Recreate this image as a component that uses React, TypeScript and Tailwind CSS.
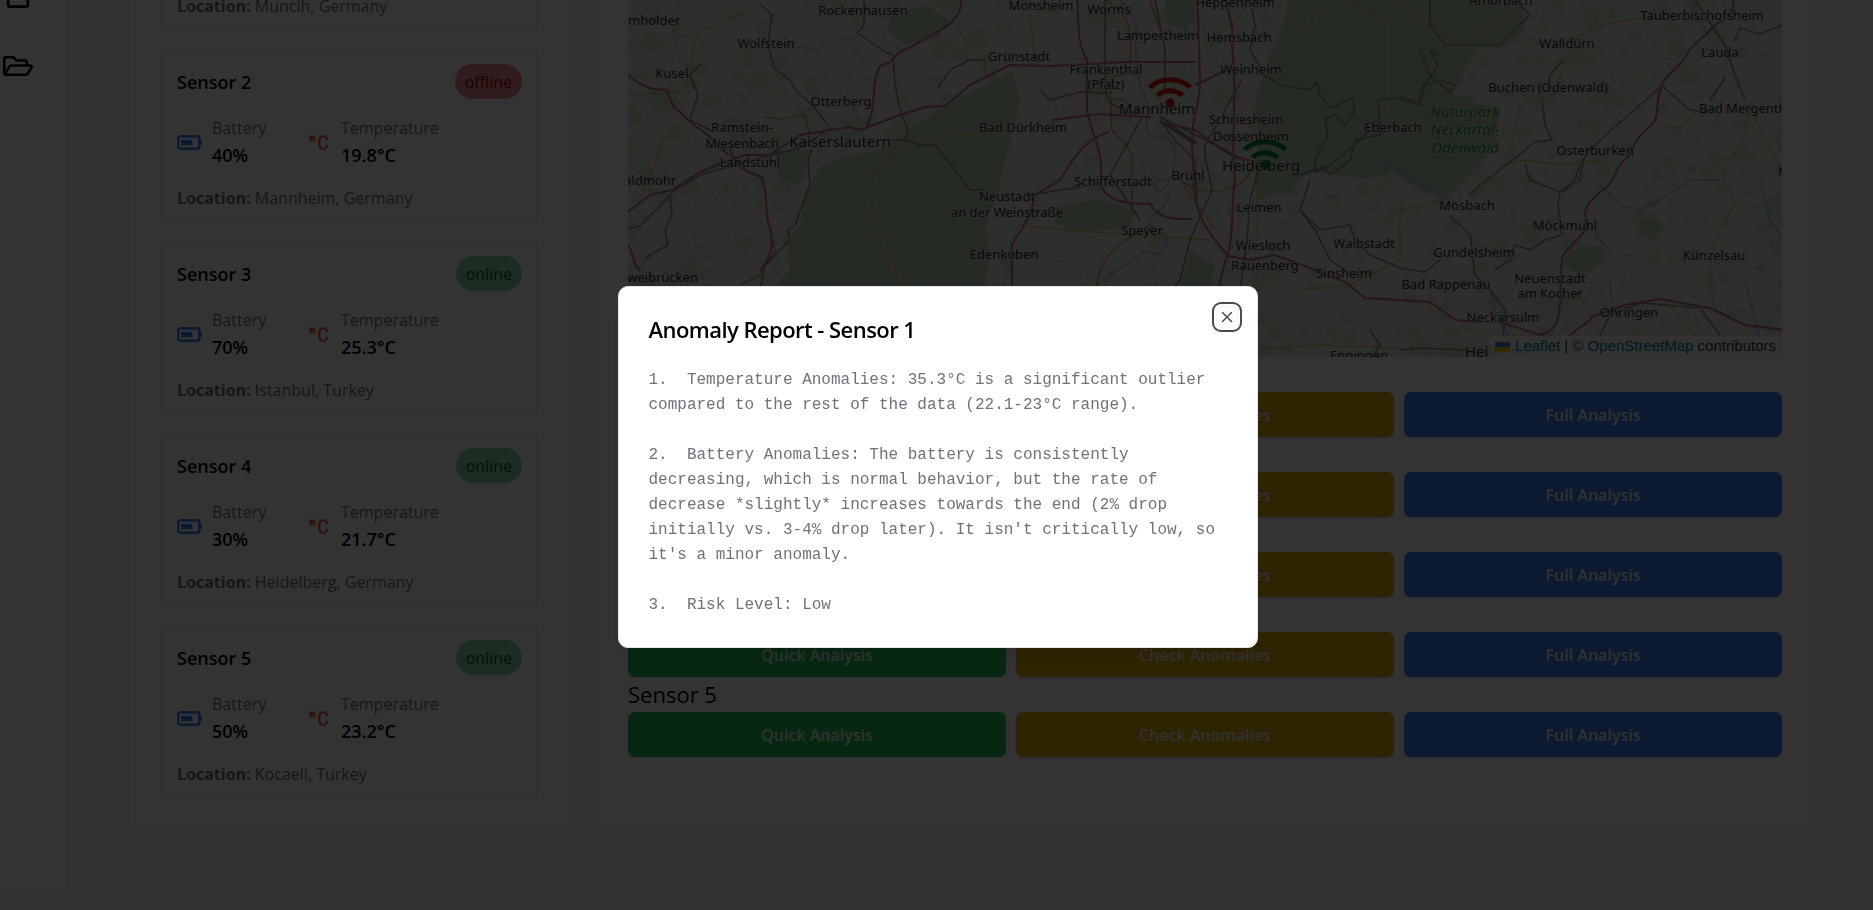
import React from "react";
import { FaRegClipboard, FaRegFolderOpen } from "react-icons/fa";
import { TbTemperatureCelsius } from "react-icons/tb";
import { X } from "lucide-react";

type Sensor = {
  name: string;
  status: "online" | "offline";
  battery: number;
  temperature: number;
  location: string;
};

const sensors: Sensor[] = [
  { name: "Sensor 1", status: "online", battery: 85, temperature: 22.5, location: "Muncih, Germany" },
  { name: "Sensor 2", status: "offline", battery: 40, temperature: 19.8, location: "Mannheim, Germany" },
  { name: "Sensor 3", status: "online", battery: 70, temperature: 25.3, location: "Istanbul, Turkey" },
  { name: "Sensor 4", status: "online", battery: 30, temperature: 21.7, location: "Heidelberg, Germany" },
  { name: "Sensor 5", status: "online", battery: 50, temperature: 23.2, location: "Kocaeli, Turkey" },
];

const report = `1.  Temperature Anomalies: 35.3°C is a significant outlier compared to the rest of the data (22.1-23°C range).

2.  Battery Anomalies: The battery is consistently decreasing, which is normal behavior, but the rate of decrease *slightly* increases towards the end (2% drop initially vs. 3-4% drop later). It isn't critically low, so it's a minor anomaly.

3.  Risk Level: Low`;

function BatteryIcon() {
  return (
    <svg width="25" height="15" viewBox="0 0 25 15" className="shrink-0 text-[#3b82f6]" aria-hidden="true">
      <rect x="1.200" y="1.200" width="21" height="12.600" rx="2.200" fill="none" stroke="currentColor" strokeWidth="2.400" />
      <rect x="4" y="5" width="11.300" height="5" fill="currentColor" />
      <path d="M22.500 3.500l1.500 1.200q1 .5 1 1.500v2.600q0 1-1 1.500l-1.500 1.200z" fill="currentColor" />
    </svg>
  );
}

function SensorCard({ sensor }: { sensor: Sensor }) {
  const badge = sensor.status === "online" ? "bg-[#86e0a8] text-green-800" : "bg-[#f08a8a] text-red-800";
  return (
    <article className="h-44 rounded-md border border-gray-200 bg-white p-[15px]">
      <div className="flex items-center justify-between">
        <h3 className="text-lg font-semibold text-black">{sensor.name}</h3>
        <span className={"flex h-[35px] items-center rounded-full px-[10px] " + badge}>{sensor.status}</span>
      </div>
      <div className="mt-4 grid grid-cols-[129px_1fr] leading-[27px]">
        <div className="flex items-center gap-[10px]">
          <BatteryIcon />
          <div>
            <p className="text-[#6b7280]">Battery</p>
            <p className="text-lg leading-[27px] font-semibold text-black">{sensor.battery}%</p>
          </div>
        </div>
        <div className="flex items-center gap-[10px]">
          <TbTemperatureCelsius className="size-[25px] shrink-0 text-[#ef4444]" />
          <div>
            <p className="text-[#6b7280]">Temperature</p>
            <p className="text-lg leading-[27px] font-semibold text-black">{sensor.temperature}°C</p>
          </div>
        </div>
      </div>
      <p className="mt-4 leading-[27px] text-[#6b7280]">
        <strong className="font-bold">Location:</strong> {sensor.location}
      </p>
    </article>
  );
}

/* Small seeded generator, so the terrain is the same on every load. */
function seeded(seed: number) {
  let s = seed;
  return () => {
    s = (s * 16807) % 2147483647;
    return s / 2147483647;
  };
}

function makeTerrain() {
  const rnd = seeded(77);
  const woods: string[] = [];
  for (let i = 0; i < 1900; i++) {
    const x = 620 + rnd() * 1170;
    const y = -150 + rnd() * 515;
    const plain = x > 1010 && x < 1250;
    if (plain && rnd() < 0.8) continue;
    const r = 2 + rnd() * rnd() * 11;
    let d = "";
    for (let k = 0; k < 9; k++) {
      const a = (k / 9) * Math.PI * 2;
      const q = r * (0.5 + rnd() * 0.8);
      d += (k ? "L" : "M") + (x + Math.cos(a) * q * 1.2).toFixed(1) + " " + (y + Math.sin(a) * q).toFixed(1);
    }
    woods.push(d + "Z");
  }
  const lanes: string[] = [];
  for (let i = 0; i < 330; i++) {
    let x = 620 + rnd() * 1170;
    let y = -150 + rnd() * 515;
    let a = rnd() * Math.PI * 2;
    let d = "M" + x.toFixed(1) + " " + y.toFixed(1);
    for (let k = 0; k < 8; k++) {
      a += (rnd() - 0.5) * 1.3;
      x += Math.cos(a) * 8;
      y += Math.sin(a) * 8;
      d += "L" + x.toFixed(1) + " " + y.toFixed(1);
    }
    lanes.push(d);
  }
  return { woods: woods.join(""), lanes: lanes.join("") };
}

const terrain = makeTerrain();

const forests = [
  "M905 132L935 112L985 85L1012 72L1020 100L1015 125L1008 150L1000 180L996 200L985 225L990 255L982 300H760L790 270L788 245L800 225L806 190L822 165L850 155L880 150Z",
  "M890 15L925 5L950 20L935 38L905 45L888 30Z",
  "M775 150L812 150L800 185L778 178Z",
  "M1255 100L1268 60L1285 20L1290 -20L1400 -30L1470 -20L1480 40L1455 90L1440 160L1400 170L1370 180L1310 172L1290 190L1258 200L1258 150Z",
  "M1380 60L1440 90L1500 110L1495 150L1445 200L1420 190L1375 160Z",
  "M1165 0H1195V20L1185 30L1167 24Z",
  "M1056 205L1100 200L1135 210L1130 228L1080 232L1055 222Z",
  "M1190 250L1215 265L1210 290H1180Z",
  "M1430 0L1520 -10L1525 30L1500 48L1450 46L1428 20Z",
  "M1570 250L1600 245L1605 262L1580 275L1562 265Z",
  "M1640 218L1665 222L1655 240L1638 236Z",
];

const motorways = [
  "M628 75C640 85 650 90 666 90C672 100 672 108 680 112L690 122C700 130 708 133 718 145L728 155",
  "M628 212L650 195L672 190L700 172L725 162L745 155L770 155L800 135L830 130L850 127L860 130L900 115L925 107L945 106L970 85L1010 65L1052 66L1125 62L1195 62",
  "M960 -20L961 5C958 25 935 32 920 42L900 52L890 62L880 66C870 85 878 105 866 128",
  "M730 150C740 175 755 172 762 178C768 195 765 210 768 222C775 240 772 258 760 270",
  "M1076 -20C1080 20 1075 40 1087 60L1087 110C1092 140 1105 150 1100 185C1110 205 1130 203 1150 204C1160 220 1175 219 1192 219",
  "M1197 -20L1200 80C1200 110 1190 120 1192 145L1194 190C1197 225 1220 245 1228 256L1250 260L1275 255L1310 268L1345 282L1365 298L1400 300L1430 302L1456 320L1480 322",
  "M1224 -20C1225 15 1235 20 1232 45C1238 100 1230 150 1235 180C1230 215 1235 240 1225 262L1218 290",
  "M1196 85L1222 72M1052 120L1068 118L1098 114L1150 117",
  "M1733 0C1735 15 1725 20 1715 25C1700 42 1690 45 1685 58C1675 70 1665 75 1662 85C1655 100 1660 112 1654 122C1640 135 1635 140 1630 155C1610 170 1620 180 1600 192C1585 205 1582 212 1588 228L1563 255C1558 275 1563 290 1560 305C1558 325 1555 330 1540 335L1500 322",
  "M1570 335C1580 325 1588 325 1592 317L1625 305L1660 299L1710 308L1745 325L1785 330",
  "M1012 295V245L1030 215L1035 195L1060 180C1075 155 1085 140 1108 132",
  "M1160 122L1195 130L1233 157L1250 160",
  "M628 245C635 255 632 265 640 270",
];

const trunks = [
  "M765 117L780 119L805 115L810 138",
  "M1105 0C1120 10 1135 20 1130 60C1135 75 1115 75 1112 78C1110 90 1110 100 1112 130C1125 145 1135 150 1132 165V210",
  "M1180 180C1200 195 1225 195 1245 180L1258 160L1275 165",
  "M1150 225C1120 245 1100 250 1096 290",
  "M1150 0L1160 30L1180 40M1110 100C1128 95 1128 105 1130 118",
  "M768 222L775 250L760 275L740 285",
];

const secondaries = [
  "M745 10C720 30 700 25 695 40C690 60 695 75 680 90M628 95L690 92M680 122C660 140 660 150 655 165L635 210",
  "M896 145C895 170 870 165 872 180C880 205 860 215 872 232C885 230 890 245 900 290M905 145L945 135L980 135",
  "M953 22L965 40L985 55M985 60V75L1000 80",
  "M1400 5L1440 30L1460 45L1520 10M1385 25V110M1345 0L1396 25",
  "M1580 35L1600 25L1640 18L1700 20M1565 60L1555 95L1520 105L1510 150M1500 165L1525 160L1560 165L1600 160M1660 125L1680 128L1695 112",
  "M1750 110C1745 140 1740 150 1725 165C1718 185 1735 190 1735 205C1715 235 1710 250 1710 280L1715 310M1755 118L1770 150L1785 170",
  "M1020 225L1060 230L1180 238L1210 240M1180 180L1215 230M1256 165L1258 240",
  "M1300 290L1350 285L1400 260L1400 210L1440 200M1440 310H1430V295M1460 325L1480 335",
  "M1080 300L1115 270M1020 0L1060 14M1030 15L1035 60L1020 75",
  "M1300 50L1320 0M1250 0C1230 40 1215 20 1210 50M1660 295L1700 340M1240 350L1320 345L1400 348",
];

const railways = [
  "M628 229L640 226L675 190L700 175L760 158L800 148L830 128M760 4L772 15L768 45L774 68L790 80L795 90L812 105L828 125",
  "M864 0V25L857 33L885 52L893 55L895 85L900 110L908 130L905 140L920 145L935 145L955 170L970 190L985 190",
  "M700 65L690 75L698 95L690 120L712 131M880 140L905 140M812 150L808 160L810 185L795 225L788 230L790 240L765 265L760 290",
  "M1105 0V85C1105 100 1112 105 1120 108M1155 0L1165 50V90M1142 117L1110 175L1140 220M1160 117L1245 160M1242 80L1205 145V155L1212 190L1190 240L1180 280L1172 290",
  "M1030 195L1080 187M1040 90L1050 100L1080 92L1108 93M938 88L950 70L970 60L985 60",
  "M1160 120L1175 140L1195 160L1197 200M1260 165L1250 200L1247 240L1240 290",
  "M1300 175L1330 165L1355 145L1370 130M1310 180L1300 210L1315 230L1330 260L1345 270",
  "M1695 0L1725 45L1735 75L1745 100M1725 78L1710 100M1662 86L1690 110L1700 111M1660 87L1640 105L1600 140L1590 150L1583 160L1580 180L1562 192",
  "M1542 100L1545 125L1552 140L1535 142L1500 170L1480 185L1470 195M1563 60L1550 75L1548 90",
  "M1450 216L1470 235L1475 275L1490 290L1505 310L1503 340M1600 335L1610 315L1640 303L1700 308L1720 335",
  "M1400 350L1420 348L1465 350M1370 330L1380 345L1370 360M628 340L650 300",
];

const borders = [
  "M1250 0L1255 25L1250 50L1265 75L1280 85L1310 90L1317 82L1320 95L1330 108L1352 98L1355 110L1345 125L1335 115L1325 120L1328 135L1315 160L1315 172L1325 168L1330 175L1350 160L1355 140L1380 135L1378 100L1395 98L1420 105L1425 85L1440 80L1455 85L1450 92L1430 75L1420 50",
  "M1430 0V25L1445 45L1500 45L1515 30L1530 15L1520 5M1400 97L1418 102L1422 88L1438 65L1430 50L1440 55",
  "M1525 165L1530 180L1560 192L1575 180L1580 165M1560 192L1558 205L1562 235L1545 240L1530 250L1515 245L1510 260L1495 270",
  "M1300 210L1320 230L1350 225L1355 240L1370 255L1400 268L1425 272L1440 260M1735 40L1740 28L1760 34L1785 24",
  "M670 195L672 215L665 230L668 245L650 255L645 260",
];

const rivers = [
  "M1120 0C1135 15 1140 25 1135 45L1140 85L1150 110C1140 130 1150 140 1165 138C1180 145 1175 160 1172 175C1165 190 1160 195 1155 188C1150 180 1160 178 1165 180M1170 190C1165 215 1145 215 1150 225C1170 235 1175 245 1155 255L1145 250C1130 265 1110 270 1105 285",
  "M1380 160L1440 195M1500 300L1490 290L1495 310L1510 340",
  "M1600 185L1620 205L1640 210L1660 200L1690 180L1720 180M1610 250C1600 240 1590 235 1600 230M1610 280L1612 300M1760 180L1770 220L1785 240M1745 280L1760 340M1690 0L1710 40",
];

type Label = [string, number, number, number?, ("start" | "middle")?];
const labels: Label[] = [
  ["Lauterecken", 758, 0],
  ["mholder", 628, 25, 13, "start"],
  ["Rockenhausen", 863, 15],
  ["Wolfstein", 766, 48],
  ["Kusel", 672, 78],
  ["Otterberg", 841, 106],
  ["Ramstein-", 742, 132],
  ["Miesenbach", 742, 148],
  ["Kaiserslautern", 840, 147, 15],
  ["Landstuhl", 750, 167],
  ["aldmohr", 624, 185, 13, "start"],
  ["weibrücken", 627, 282, 13, "start"],
  ["Monsheim", 1041, 10],
  ["Worms", 1109, 14],
  ["Heppenheim", 1235, 7],
  ["Lampertheim", 1158, 40],
  ["Hemsbach", 1239, 42],
  ["Grünstadt", 1019, 61],
  ["Frankenthal", 1106, 74],
  ["(Pfalz)", 1106, 89],
  ["Weinheim", 1251, 74],
  ["Mannheim", 1157, 114, 15],
  ["Schriesheim", 1246, 124],
  ["Dossenheim", 1251, 141],
  ["Heidelberg", 1261, 171, 15],
  ["Bad Dürkheim", 1023, 132],
  ["Eberbach", 1393, 132],
  ["Schifferstadt", 1113, 186],
  ["Brühl", 1188, 180],
  ["Leimen", 1259, 212],
  ["Speyer", 1142, 235],
  ["Neustadt", 1007, 201],
  ["an der Weinstraße", 1007, 217],
  ["Edenkoben", 1004, 259],
  ["Wiesloch", 1263, 250],
  ["Rauenberg", 1265, 270],
  ["Waibstadt", 1364, 248],
  ["Sinsheim", 1344, 278],
  ["Amorbach", 1501, 5],
  ["Tauberbischofsheim", 1702, 20],
  ["Walldürn", 1567, 48],
  ["Lauda", 1720, 57],
  ["Buchen (Odenwald)", 1548, 92],
  ["Bad Mergenth", 1699, 113, 13, "start"],
  ["Osterburken", 1595, 155],
  ["M", 1778, 176, 13, "start"],
  ["Mosbach", 1467, 210],
  ["Möckmühl", 1565, 230],
  ["Gundelsheim", 1474, 257],
  ["Künzelsau", 1714, 260],
  ["Bad Rappenau", 1446, 289],
  ["Neuenstadt", 1550, 283],
  ["am Kocher", 1550, 298],
  ["Neckarsulm", 1503, 322],
  ["Öhringen", 1629, 317],
  ["Heilbronn", 1465, 357, 15, "start"],
  ["Eppingen", 1359, 360],
];

function Marker({ x, y, color }: { x: number; y: number; color: string }) {
  return (
    <g transform={`translate(${x} ${y})`} fill="none" stroke={color} strokeWidth="5">
      <path d="M-20.500 -15.500C-9 -25.800 9 -25.800 20.500 -15.500" />
      <path d="M-12.500 -7.500C-5.500 -14 5.500 -14 12.500 -7.500" />
      <circle r="4.500" fill={color} stroke="none" />
    </g>
  );
}

function SensorMap() {
  return (
    <div className="relative h-[500px] overflow-hidden bg-[#e6eadc]">
      <svg viewBox="0 0 1154 500" preserveAspectRatio="xMidYMid slice" className="size-full" role="img" aria-label="Sensor map">
        <rect width="1154" height="500" fill="#e4e8dc" />
        <g transform="translate(-628 143)" fill="none" strokeLinejoin="round" strokeLinecap="round">
          <path d={terrain.woods} fill="#cad9c0" />
          <g fill="#bdd0b3">
            {forests.map((d) => (
              <path key={d} d={d} />
            ))}
          </g>
          <path d={terrain.lanes} stroke="#bfbfc0" strokeWidth="1" opacity="0.7" />
          <g stroke="#a9c8d2" strokeWidth="2">
            {rivers.map((d) => (
              <path key={d} d={d} />
            ))}
          </g>
          <g stroke="#d9ba88" strokeWidth="1.400">
            {secondaries.map((d) => (
              <path key={d} d={d} />
            ))}
          </g>
          <g stroke="#d8987a" strokeWidth="1.700">
            {trunks.map((d) => (
              <path key={d} d={d} />
            ))}
          </g>
          <g stroke="#85907f" strokeWidth="1.600">
            {borders.map((d) => (
              <path key={d} d={d} />
            ))}
          </g>
          <g stroke="#85857d" strokeWidth="1.500">
            {railways.map((d) => (
              <path key={d} d={d} />
            ))}
          </g>
          <path d="M1165 123L1195 143" stroke="#85857d" strokeWidth="4" />
          <g stroke="#d0648a" strokeWidth="2">
            {motorways.map((d) => (
              <path key={d} d={d} />
            ))}
          </g>
        </g>
        <g
          transform="translate(-628 143)"
          fill="#2b2b2b"
          stroke="#e6eadc"
          strokeWidth="2"
          strokeOpacity="0.6"
          paintOrder="stroke"
          className="font-['Noto_Sans',sans-serif]"
        >
          {labels.map(([text, x, y, size = 13, anchor = "middle"]) => (
            <text key={text} x={x} y={y} fontSize={size} textAnchor={anchor}>
              {text}
            </text>
          ))}
          <g fill="#2b9038" fontStyle="italic" fontSize="15" textAnchor="middle">
            <text x="1465" y="117">Naturpark</text>
            <text x="1465" y="135">Neckartal-</text>
            <text x="1465" y="153">Odenwald</text>
          </g>
        </g>
        <g transform="translate(-628 143)">
          <Marker x={1170} y={103} color="#e01414" />
          <Marker x={1265} y={165} color="#00803a" />
        </g>
      </svg>
      <div className="absolute right-0 bottom-0 flex h-[21px] items-center gap-[5px] bg-white/80 px-[6px] font-['Liberation_Sans',sans-serif] text-[15px] text-[#333]">
        <svg width="15" height="10" viewBox="0 0 15 10" aria-hidden="true">
          <path fill="#4C7BE1" d="M0 0h15v5H0z" />
          <path fill="#FFD500" d="M0 5h15v5H0z" />
        </svg>
        <p>
          <a href="#leaflet" className="text-[#0078a8]">Leaflet</a> | © <a href="#osm" className="text-[#0078a8]">OpenStreetMap</a> contributors
        </p>
      </div>
    </div>
  );
}

const actionClass = "h-[45px] rounded-[7px] font-semibold text-gray-100 shadow-sm";

export default function App() {
  return (
    <div className="h-screen overflow-hidden bg-[#f9fafb] font-['Open_Sans','Noto_Sans',sans-serif] text-base">
      <div className="-mt-[174px] flex">
        <nav className="flex w-[66px] shrink-0 flex-col gap-[43px] bg-[#fcfcfc] pt-[152px] pl-[3px] text-[30px] text-black">
          <a href="#reports" aria-label="Reports"><FaRegClipboard /></a>
          <a href="#files" aria-label="Files"><FaRegFolderOpen /></a>
        </nav>
        <main className="grid grow grid-cols-[439px_1fr] gap-7 pr-[60px] pb-16 pl-16">
          <section className="flex flex-col gap-4 rounded-lg bg-white px-[31px] py-[30px]">
            {sensors.map((s) => (
              <SensorCard key={s.name} sensor={s} />
            ))}
          </section>
          <section className="rounded-lg bg-white p-[31px]">
            <SensorMap />
            {sensors.map((s) => (
              <div key={s.name}>
                <h2 className="h-[35px] text-[22px] leading-[35px] font-medium text-black">{s.name}</h2>
                <div className="grid grid-cols-3 gap-[10px]">
                  <button className={actionClass + " bg-[#22c55e]"}>Quick Analysis</button>
                  <button className={actionClass + " bg-[#eab308]"}>Check Anomalies</button>
                  <button className={actionClass + " bg-[#3b82f6]"}>Full Analysis</button>
                </div>
              </div>
            ))}
          </section>
        </main>
      </div>
      <footer className="h-10 bg-[#f0f4f4]" />

      <div className="fixed inset-0 flex items-center justify-center bg-black/80 pt-6 pl-[2px]">
        <div role="dialog" aria-labelledby="report-title" className="relative w-[640px] rounded-[10px] border border-gray-200 bg-white px-[30px] pt-[30px] pb-[29px] shadow-lg">
          <h2 id="report-title" className="text-[22px] leading-[24px] font-semibold tracking-tight text-black">
            Anomaly Report - Sensor 1
          </h2>
          <pre className="mt-[27px] font-['Liberation_Mono',monospace] text-[16px] leading-[25px] whitespace-pre-wrap text-[#71717a]">
            {report}
          </pre>
          <button
            aria-label="Close"
            className="absolute top-[19px] right-[19px] flex size-[22px] items-center justify-center rounded-[5px] border border-gray-100 bg-white text-black opacity-70 ring-2 ring-black ring-offset-2 ring-offset-white"
          >
            <X size={18} strokeWidth={2} className="shrink-0" />
          </button>
        </div>
      </div>
    </div>
  );
}
